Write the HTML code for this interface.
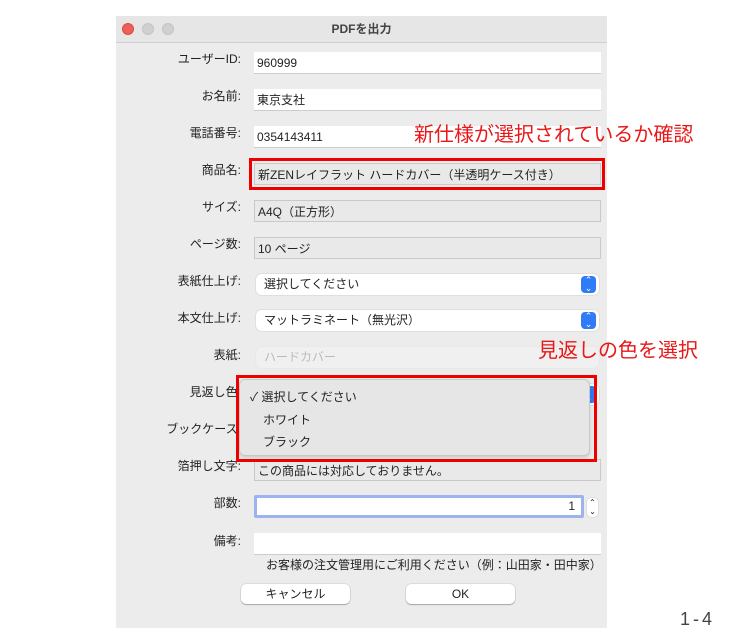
<!DOCTYPE html>
<html><head><meta charset="utf-8"><style>
body{margin:0;width:734px;height:644px;background:#fff;position:relative;overflow:hidden;font-family:"Liberation Sans","Noto Sans CJK JP",sans-serif;font-size:12px;color:#222}
.win{position:absolute;left:116px;top:16px;width:491px;height:612px;background:#ececec}
.tb{position:absolute;left:0;top:0;width:100%;height:26px;background:#e6e6e6;border-bottom:1px solid #d0d0d0;text-align:center;line-height:26px;font-weight:bold;font-size:12px;color:#444}
.dot{position:absolute;top:7px;width:12px;height:12px;border-radius:50%;background:#d0d0d0;border:1px solid #c4c4c4;box-sizing:border-box}
.a{position:absolute}
.lab{position:absolute;width:125px;left:0;text-align:right;color:#222}
.f{position:absolute;left:254px;width:347px;height:22px;background:#fff;box-sizing:border-box;border-bottom:1px solid #ccc;padding-left:3px;line-height:22px}
.g{background:#e9e9e9;border:1px solid #c9c9c9}
.s{position:absolute;left:256px;width:343px;height:21px;background:#fff;border-radius:5px;box-shadow:0 0 1px #999;box-sizing:border-box;padding-left:8px;line-height:21px}
.arr{position:absolute;right:3px;top:2px;width:15px;height:17px;background:#2f7cf6;border-radius:4px;color:#fff;font-size:9px;line-height:8px;text-align:center}
.red{position:absolute;border:3px solid #e00;box-sizing:border-box}
.ann{position:absolute;color:#e81818;font-size:20px;white-space:nowrap}
.btn{position:absolute;top:584px;height:20px;width:109px;background:#fff;border-radius:5px;box-shadow:0 0 1px #888,0 1px 1px #aaa;text-align:center;line-height:20px}
</style></head><body>
<div class="win">
<div class="tb">PDFを出力</div>
<div class="dot" style="left:6px;background:#ed5f57;border-color:#d84c44"></div>
<div class="dot" style="left:26px"></div>
<div class="dot" style="left:46px"></div>
</div>
<div class="lab" style="left:116px;top:50px">ユーザーID:</div>
<div class="f" style="top:52px">960999</div>
<div class="lab" style="left:116px;top:87px">お名前:</div>
<div class="f" style="top:89px">東京支社</div>
<div class="lab" style="left:116px;top:124px">電話番号:</div>
<div class="f" style="top:126px">0354143411</div>
<div class="lab" style="left:116px;top:161px">商品名:</div>
<div class="f g" style="top:163px">新ZENレイフラット ハードカバー（半透明ケース付き）</div>
<div class="lab" style="left:116px;top:198px">サイズ:</div>
<div class="f g" style="top:200px">A4Q（正方形）</div>
<div class="lab" style="left:116px;top:235px">ページ数:</div>
<div class="f g" style="top:237px">10 ページ</div>
<div class="lab" style="left:116px;top:272px">表紙仕上げ:</div>
<div class="s" style="top:274px">選択してください<div class="arr">⌃<br>⌄</div></div>
<div class="lab" style="left:116px;top:309px">本文仕上げ:</div>
<div class="s" style="top:310px">マットラミネート（無光沢）<div class="arr">⌃<br>⌄</div></div>
<div class="lab" style="left:116px;top:346px">表紙:</div>
<div class="s" style="top:347px;background:#f0f0f0;color:#bbb;box-shadow:0 0 1px #ccc">ハードカバー</div>
<div class="lab" style="left:116px;top:383px">見返し色:</div>
<div class="s" style="top:384px"><div class="arr">⌃<br>⌄</div></div>
<div class="lab" style="left:116px;top:420px">ブックケース:</div>
<div class="lab" style="left:116px;top:457px">箔押し文字:</div>
<div class="f g" style="top:459px">この商品には対応しておりません。</div>
<div class="lab" style="left:116px;top:494px">部数:</div>
<div class="f" style="top:495px;height:23px;border:3px solid #9cb3ef;border-radius:2px;text-align:right;padding-right:6px;line-height:17px;width:330px">1</div>
<div class="a" style="left:587px;top:498px;width:11px;height:19px;background:#fff;border-radius:4px;box-shadow:0 0 1px #999;font-size:8px;text-align:center;line-height:9px">⌃<br>⌄</div>
<div class="lab" style="left:116px;top:532px">備考:</div>
<div class="f" style="top:533px">&nbsp;</div>
<div class="a" style="left:266px;top:556px">お客様の注文管理用にご利用ください（例：山田家・田中家）</div>
<div class="btn" style="left:241px">キャンセル</div>
<div class="btn" style="left:406px">OK</div>
<div class="a" style="left:239px;top:379px;width:351px;height:77px;background:#e6e6e6;border:1px solid #c8c8c8;border-radius:6px;box-sizing:border-box;box-shadow:0 2px 4px rgba(0,0,0,.15)">
<div class="a" style="left:10px;top:8px">✓ 選択してください</div>
<div class="a" style="left:23px;top:31px">ホワイト</div>
<div class="a" style="left:23px;top:53px">ブラック</div>
</div>
<div class="red" style="left:249px;top:158px;width:356px;height:32px"></div>
<div class="red" style="left:236px;top:375px;width:361px;height:87px"></div>
<div class="ann" style="left:414px;top:118px">新仕様が選択されているか確認</div>
<div class="ann" style="left:538px;top:334px">見返しの色を選択</div>
<div class="a" style="left:680px;top:609px;font-size:18px;color:#444;letter-spacing:3px">1-4</div>
</body></html>
